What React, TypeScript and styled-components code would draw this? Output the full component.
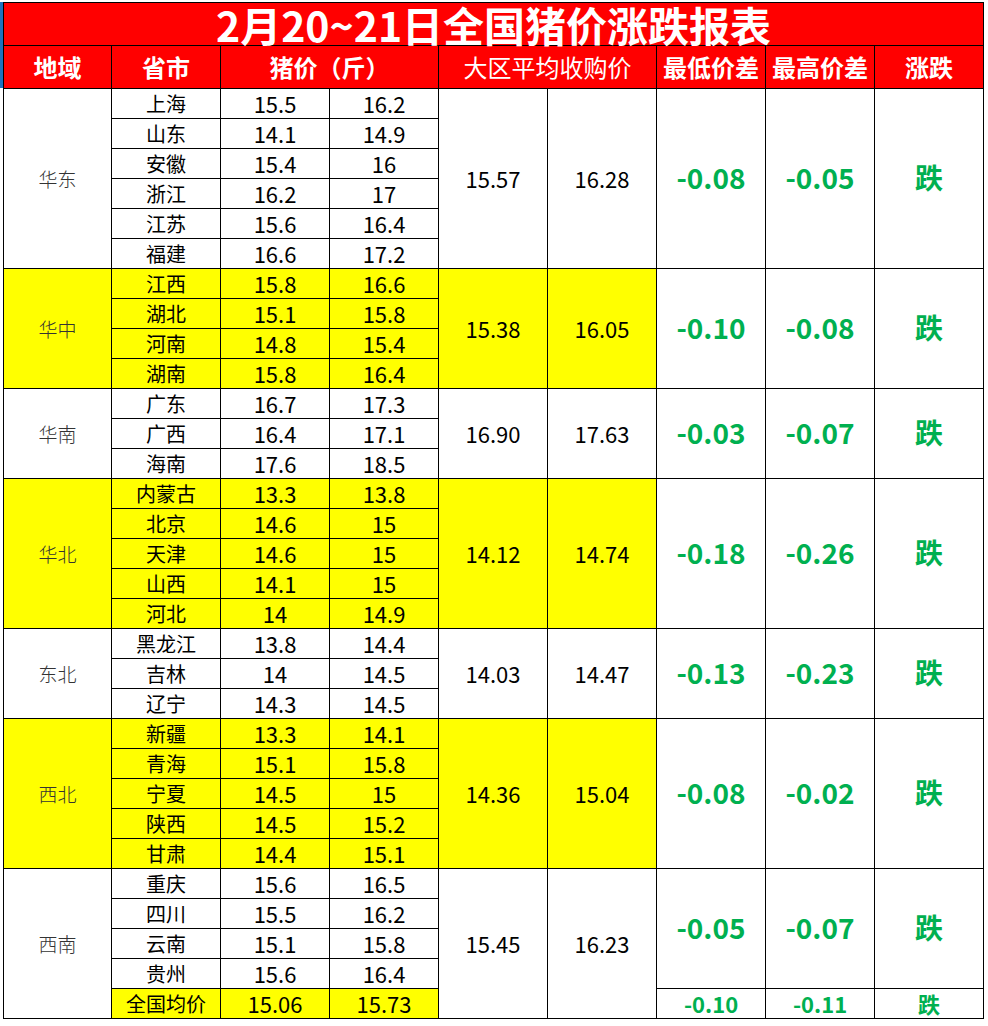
import styled, { createGlobalStyle } from 'styled-components';

type Row = { name: string; low: string; high: string; total?: boolean };
type Region = { name: string; yellow: boolean; rows: Row[]; avg: [string, string]; diff: [string, string] };

const r = (name: string, low: string, high: string, total?: boolean): Row => ({ name, low, high, total });

const regions: Region[] = [
    {
        name: '华东',
        yellow: false,
        rows: [r('上海', '15.5', '16.2'), r('山东', '14.1', '14.9'), r('安徽', '15.4', '16'), r('浙江', '16.2', '17'), r('江苏', '15.6', '16.4'), r('福建', '16.6', '17.2')],
        avg: ['15.57', '16.28'],
        diff: ['-0.08', '-0.05'],
    },
    {
        name: '华中',
        yellow: true,
        rows: [r('江西', '15.8', '16.6'), r('湖北', '15.1', '15.8'), r('河南', '14.8', '15.4'), r('湖南', '15.8', '16.4')],
        avg: ['15.38', '16.05'],
        diff: ['-0.10', '-0.08'],
    },
    {
        name: '华南',
        yellow: false,
        rows: [r('广东', '16.7', '17.3'), r('广西', '16.4', '17.1'), r('海南', '17.6', '18.5')],
        avg: ['16.90', '17.63'],
        diff: ['-0.03', '-0.07'],
    },
    {
        name: '华北',
        yellow: true,
        rows: [r('内蒙古', '13.3', '13.8'), r('北京', '14.6', '15'), r('天津', '14.6', '15'), r('山西', '14.1', '15'), r('河北', '14', '14.9')],
        avg: ['14.12', '14.74'],
        diff: ['-0.18', '-0.26'],
    },
    {
        name: '东北',
        yellow: false,
        rows: [r('黑龙江', '13.8', '14.4'), r('吉林', '14', '14.5'), r('辽宁', '14.3', '14.5')],
        avg: ['14.03', '14.47'],
        diff: ['-0.13', '-0.23'],
    },
    {
        name: '西北',
        yellow: true,
        rows: [r('新疆', '13.3', '14.1'), r('青海', '15.1', '15.8'), r('宁夏', '14.5', '15'), r('陕西', '14.5', '15.2'), r('甘肃', '14.4', '15.1')],
        avg: ['14.36', '15.04'],
        diff: ['-0.08', '-0.02'],
    },
    {
        name: '西南',
        yellow: false,
        rows: [r('重庆', '15.6', '16.5'), r('四川', '15.5', '16.2'), r('云南', '15.1', '15.8'), r('贵州', '15.6', '16.4'), r('全国均价', '15.06', '15.73', true)],
        avg: ['15.45', '16.23'],
        diff: ['-0.05', '-0.07'],
    },
];

const nationalDiff = ['-0.10', '-0.11'];

function App() {
    return (
        <>
            <GlobalStyle />
            <Page>
                <Gutter>
                    <SelectMark />
                </Gutter>
                <Sheet>
                    <colgroup>
                        <col style={{ width: 108 }} />
                        {Array.from({ length: 8 }).map((_, i) => (
                            <col key={i} style={{ width: 109 }} />
                        ))}
                    </colgroup>
                    <tbody>
                        <tr>
                            <TitleCell colSpan={9}>2月20~21日全国猪价涨跌报表</TitleCell>
                        </tr>
                        <tr>
                            <HeadCell>地域</HeadCell>
                            <HeadCell>省市</HeadCell>
                            <HeadCell colSpan={2}>猪价（斤）</HeadCell>
                            <HeadCell colSpan={2} $light>
                                大区平均收购价
                            </HeadCell>
                            <HeadCell>最低价差</HeadCell>
                            <HeadCell>最高价差</HeadCell>
                            <HeadCell>涨跌</HeadCell>
                        </tr>
                        {regions.map((reg) => {
                            const n = reg.rows.length;
                            const diffSpan = reg.rows.some((x) => x.total) ? n - 1 : n;
                            return reg.rows.map((row, i) => {
                                const fill = reg.yellow || !!row.total;
                                return (
                                    <tr key={reg.name + row.name}>
                                        {i === 0 && (
                                            <RegionCell rowSpan={n} $yellow={reg.yellow}>
                                                {reg.name}
                                            </RegionCell>
                                        )}
                                        <NameCell $yellow={fill}>{row.name}</NameCell>
                                        <NumCell $yellow={fill}>{row.low}</NumCell>
                                        <NumCell $yellow={fill}>{row.high}</NumCell>
                                        {i === 0 && (
                                            <>
                                                <NumCell rowSpan={n} $yellow={reg.yellow}>
                                                    {reg.avg[0]}
                                                </NumCell>
                                                <NumCell rowSpan={n} $yellow={reg.yellow}>
                                                    {reg.avg[1]}
                                                </NumCell>
                                                <DiffCell rowSpan={diffSpan}>{reg.diff[0]}</DiffCell>
                                                <DiffCell rowSpan={diffSpan}>{reg.diff[1]}</DiffCell>
                                                <DiffCell rowSpan={diffSpan}>跌</DiffCell>
                                            </>
                                        )}
                                        {row.total && (
                                            <>
                                                <DiffCell $small>{nationalDiff[0]}</DiffCell>
                                                <DiffCell $small>{nationalDiff[1]}</DiffCell>
                                                <DiffCell $small>跌</DiffCell>
                                            </>
                                        )}
                                    </tr>
                                );
                            });
                        })}
                    </tbody>
                </Sheet>
            </Page>
        </>
    );
}

export default App;

const GlobalStyle = createGlobalStyle`
    html, body {
        margin: 0;
        padding: 0;
        background: #fff;
    }
    body {
        font-family: "Noto Sans CJK SC", "Microsoft YaHei", sans-serif;
    }
`;

const Page = styled.div`
    display: flex;
    width: 988px;
    height: 1026px;
    padding-top: 2px;
    box-sizing: border-box;
    overflow: hidden;
`;

const Gutter = styled.div`
    width: 3px;
    flex: none;
`;

const SelectMark = styled.div`
    width: 3px;
    height: 86px;
    background: #1e73be;
`;

const Sheet = styled.table`
    border-collapse: collapse;
    table-layout: fixed;
    width: 981px;
    height: fit-content;
    td {
        border: 1px solid #000;
        padding: 0;
        text-align: center;
        vertical-align: middle;
        white-space: nowrap;
        line-height: 1;
        height: 29px;
    }
`;

const TitleCell = styled.td`
    && {
        height: 42px;
    }
    background: #ff0000;
    color: #fff;
    font-size: 41px;
    font-weight: 700;
`;

const HeadCell = styled.td<{ $light?: boolean }>`
    && {
        height: 42px;
    }
    background: #ff0000;
    color: #fff;
    font-size: 24px;
    font-weight: ${(p) => (p.$light ? 400 : 700)};
`;

const RegionCell = styled.td<{ $yellow?: boolean }>`
    background: ${(p) => (p.$yellow ? '#ffff00' : '#fff')};
    color: #333;
    font-size: 19px;
    font-weight: 300;
`;

const NameCell = styled.td<{ $yellow?: boolean }>`
    background: ${(p) => (p.$yellow ? '#ffff00' : '#fff')};
    color: #000;
    font-size: 20px;
`;

const NumCell = styled.td<{ $yellow?: boolean }>`
    && {
        height: 27px;
        padding-bottom: 2px;
    }
    background: ${(p) => (p.$yellow ? '#ffff00' : '#fff')};
    color: #000;
    font-size: 22px;
`;

const DiffCell = styled.td<{ $small?: boolean }>`
    && {
        height: 27px;
        padding-bottom: ${(p) => (p.$small ? '2px' : '4px')};
    }
    background: #fff;
    color: #00b050;
    font-size: ${(p) => (p.$small ? '22px' : '28px')};
    font-weight: 700;
`;
